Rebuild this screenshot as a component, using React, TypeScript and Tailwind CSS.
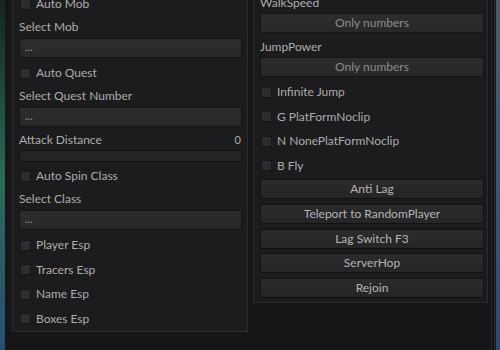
import React from "react";

const font = { fontFamily: "Lato, 'Liberation Sans', sans-serif" };

function Check({ label }: { label: string }) {
  return (
    <div className="flex h-[24.5px] items-center gap-[5px] pl-[1px]">
      <div className="h-[11px] w-[11px] border border-[#161518] bg-[#2d2c2f]" />
      <span className="text-[12px] text-[#adadad]">{label}</span>
    </div>
  );
}

function Dropdown({ label }: { label: string }) {
  return (
    <div className="mb-[3.5px]">
      <div className="flex h-[21px] items-center text-[12px] text-[#adadad]">{label}</div>
      <div className="flex h-[20px] items-center border border-[#141316] bg-gradient-to-b from-[#2d2c2f] to-[#28272a] pl-[5px] text-[11px] text-[#9a9a9a]">
        ...
      </div>
    </div>
  );
}

function NumberBox({ label }: { label: string }) {
  return (
    <div className="mb-[3px]">
      <div className="flex h-[21px] items-center text-[12px] text-[#adadad]">{label}</div>
      <div className="flex h-[20px] items-center justify-center border border-[#141316] bg-gradient-to-b from-[#2d2c2f] to-[#28272a] text-[12px] text-[#8c8c8c]">
        Only numbers
      </div>
    </div>
  );
}

function Button({ label }: { label: string }) {
  return (
    <div className="flex h-[20px] items-center justify-center border border-[#121114] bg-gradient-to-b from-[#2b2a2d] to-[#252427] text-[12px] text-[#b5b5b5]">
      {label}
    </div>
  );
}

export default function App() {
  return (
    <div className="flex h-[350px] w-[500px] overflow-hidden bg-[#161518]" style={font}>
      {/* desktop behind the window */}
      <div className="w-[5px] shrink-0 bg-gradient-to-b from-[#16261f] via-[#2a6a55] to-[#2c4d72]" />

      <div className="flex flex-1 gap-[5px] pl-[7px]">
        {/* left panel */}
        <div className="-mt-[13px] h-[345px] w-[236px] shrink-0 border border-[#2c2b2e] bg-[#1c1b1e] pl-[6px] pr-[5px] pt-[4px]">
          <Check label="Auto Mob" />
          <Dropdown label="Select Mob" />
          <Check label="Auto Quest" />
          <Dropdown label="Select Quest Number" />
          <div className="mb-[2px]">
            <div className="flex h-[20px] items-center justify-between text-[12px] text-[#adadad]">
              <span>Attack Distance</span>
              <span className="pr-[1px] text-[11px]">0</span>
            </div>
            <div className="h-[12px] border border-[#141316] bg-[#252427]" />
          </div>
          <Check label="Auto Spin Class" />
          <Dropdown label="Select Class" />
          <Check label="Player Esp" />
          <Check label="Tracers Esp" />
          <Check label="Name Esp" />
          <Check label="Boxes Esp" />
        </div>

        {/* right panel */}
        <div className="-mt-[13px] h-[316px] w-[235px] shrink-0 border border-[#2c2b2e] bg-[#1c1b1e] pl-[6px] pr-[3px] pt-[4px]">
          <NumberBox label="WalkSpeed" />
          <NumberBox label="JumpPower" />
          <Check label="Infinite Jump" />
          <Check label="G PlatFormNoclip" />
          <Check label="N NonePlatFormNoclip" />
          <Check label="B Fly" />
          <div className="mt-[1px] flex flex-col gap-[4.75px]">
            <Button label="Anti Lag" />
            <Button label="Teleport to RandomPlayer" />
            <Button label="Lag Switch F3" />
            <Button label="ServerHop" />
            <Button label="Rejoin" />
          </div>
        </div>

        {/* window frame */}
        <div className="ml-[-4px] flex shrink-0">
          <div className="w-[2px]" />
          <div className="w-[1px] bg-[#2a292c]" />
          <div className="w-[2px] bg-[#0f0e10]" />
          <div className="w-[1px] bg-[#2f2e31]" />
          <div className="w-[1px] bg-[#19181b]" />
        </div>
      </div>

      <div className="w-[5px] shrink-0 bg-gradient-to-b from-[#4d5a6a] via-[#3b5677] to-[#2c4a70]" />
    </div>
  );
}
